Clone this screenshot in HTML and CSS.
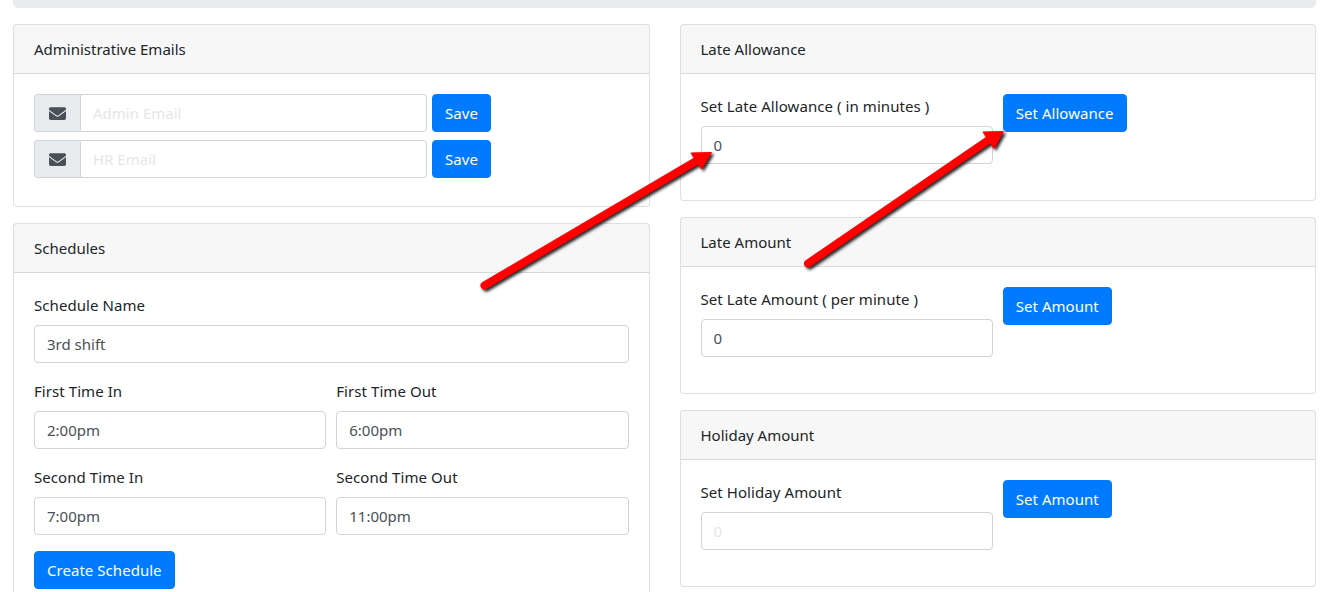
FILE: index.html
```html
<!DOCTYPE html>
<html lang="en">
<head>
<meta charset="utf-8">
<title>Settings</title>
<link rel="stylesheet" href="styles.css">
</head>
<body>
<svg width="0" height="0" class="defs" aria-hidden="true"><defs>
<symbol id="env" viewBox="0 0 512 512"><path d="M502.3 190.8c3.9-3.1 9.7-.2 9.7 4.7V400c0 26.5-21.5 48-48 48H48c-26.5 0-48-21.5-48-48V195.6c0-5 5.7-7.8 9.7-4.7 22.4 17.4 52.1 39.5 154.1 113.6 21.1 15.4 56.7 47.8 92.2 47.6 35.7.3 72-32.8 92.3-47.6 102-74.1 131.6-96.3 154-113.7zM256 320c23.2.4 56.6-29.2 73.4-41.4 132.7-96.3 142.8-104.7 173.4-128.7 5.8-4.5 9.2-11.5 9.2-18.9v-19c0-26.5-21.5-48-48-48H48C21.5 64 0 85.5 0 112v19c0 7.4 3.4 14.3 9.2 18.9 30.6 23.9 40.7 32.4 173.4 128.7 16.8 12.2 50.2 41.8 73.4 41.4z"/></symbol>
</defs></svg>
<div class="topbar"></div>
<main class="columns">
  <div class="col">
    <section class="card">
      <h2 class="card-header">Administrative Emails</h2>
      <div class="card-body">
        <div class="email-row">
          <div class="input-group">
            <span class="addon"><svg class="icon"><use href="#env"/></svg></span>
            <input class="control joined" placeholder="Admin Email">
          </div>
          <button class="btn">Save</button>
        </div>
        <div class="email-row">
          <div class="input-group">
            <span class="addon"><svg class="icon"><use href="#env"/></svg></span>
            <input class="control joined" placeholder="HR Email">
          </div>
          <button class="btn">Save</button>
        </div>
      </div>
    </section>
    <section class="card">
      <h2 class="card-header">Schedules</h2>
      <div class="card-body">
        <div class="field">
          <label class="label">Schedule Name</label>
          <input class="control" value="3rd shift">
        </div>
        <div class="pair">
          <div class="field"><label class="label">First Time In</label><input class="control" value="2:00pm"></div>
          <div class="field"><label class="label">First Time Out</label><input class="control" value="6:00pm"></div>
        </div>
        <div class="pair">
          <div class="field"><label class="label">Second Time In</label><input class="control" value="7:00pm"></div>
          <div class="field"><label class="label">Second Time Out</label><input class="control" value="11:00pm"></div>
        </div>
        <button class="btn">Create Schedule</button>
      </div>
    </section>
  </div>
  <div class="col">
    <section class="card">
      <h2 class="card-header">Late Allowance</h2>
      <div class="card-body">
        <div class="pair">
          <div class="field"><label class="label">Set Late Allowance ( in minutes )</label><input class="control" value="0"></div>
          <div><button class="btn">Set Allowance</button></div>
        </div>
      </div>
    </section>
    <section class="card">
      <h2 class="card-header">Late Amount</h2>
      <div class="card-body">
        <div class="pair">
          <div class="field"><label class="label">Set Late Amount ( per minute )</label><input class="control" value="0"></div>
          <div><button class="btn">Set Amount</button></div>
        </div>
      </div>
    </section>
    <section class="card">
      <h2 class="card-header">Holiday Amount</h2>
      <div class="card-body">
        <div class="pair">
          <div class="field"><label class="label">Set Holiday Amount</label><input class="control" placeholder="0"></div>
          <div><button class="btn">Set Amount</button></div>
        </div>
      </div>
    </section>
  </div>
</main>
<svg class="arrows" width="1329" height="592" viewBox="0 0 1329 592" aria-hidden="true">
  <g class="arrow">
    <path class="shaft" d="M484.500 285.500L698 160"/>
    <path class="head" d="M711.500 152.500L691 153L701.500 169Z"/>
  </g>
  <g class="arrow">
    <path class="shaft" d="M808 263.500L990 139"/>
    <path class="head" d="M1003.500 131.500L983 132L994 148.500Z"/>
  </g>
</svg>
</body>
</html>
```
FILE: styles.css
```css
* { box-sizing: border-box; }
html, body { height: 592px; overflow: hidden; }
body {
  margin: 0;
  padding: 0 13px;
  background: #fff;
  color: #212529;
  font-family: "Noto Sans", sans-serif;
  font-size: 15px;
  line-height: 24px;
  position: relative;
}
.defs { position: absolute; }
.topbar {
  height: 8px;
  background: #e9ecef;
  border-radius: 0 0 5px 5px;
  margin-bottom: 16px;
}
.columns {
  display: grid;
  grid-template-columns: 1fr 1fr;
  gap: 30px;
  align-items: start;
}
.col { display: flex; flex-direction: column; gap: 16px; min-width: 0; }
.card {
  border: 1px solid rgba(0,0,0,.125);
  border-radius: 4px;
  background: #fff;
}
.card-header {
  margin: 0;
  padding: 12px 20px;
  height: 49px;
  font: inherit;
  background: rgba(0,0,0,.03);
  border-bottom: 1px solid rgba(0,0,0,.125);
}
.card-body { padding: 20px; }
.email-row { display: flex; gap: 5px; margin-bottom: 8px; }
.input-group { display: flex; width: 393px; }
.addon {
  flex: none;
  width: 46px;
  height: 38px;
  display: flex;
  align-items: center;
  justify-content: center;
  background: #e9ecef;
  border: 1px solid #ced4da;
  border-right: 0;
  border-radius: 4px 0 0 4px;
}
.icon { width: 17px; height: 17px; fill: #495057; }
.control {
  display: block;
  width: 100%;
  height: 38px;
  padding: 6px 12px;
  border: 1px solid #ced4da;
  border-radius: 4px;
  background: #fff;
  color: #495057;
  font: inherit;
  outline: 0;
}
.control::placeholder { color: #e6e6e6; opacity: 1; }
.joined { border-radius: 0 4px 4px 0; flex: 1; min-width: 0; }
.btn {
  height: 38px;
  padding: 6px 12px;
  border: 1px solid #007bff;
  border-radius: 4px;
  background: #007bff;
  color: #fff;
  font: inherit;
  letter-spacing: .04px;
  white-space: nowrap;
}
.field { margin-bottom: 16px; min-width: 0; }
.label { display: block; margin-bottom: 8px; letter-spacing: .07px; }
.pair { display: grid; grid-template-columns: 1fr 1fr; gap: 10px; }
.arrows { position: absolute; left: 0; top: 0; pointer-events: none; }
.arrow { filter: drop-shadow(2px 2px 1.5px rgba(0,0,0,.85)); }
.shaft { stroke: #f00; stroke-width: 8px; stroke-linecap: round; fill: none; }
.head { fill: #f00; stroke: #f00; stroke-width: 1px; stroke-linejoin: round; }
```
